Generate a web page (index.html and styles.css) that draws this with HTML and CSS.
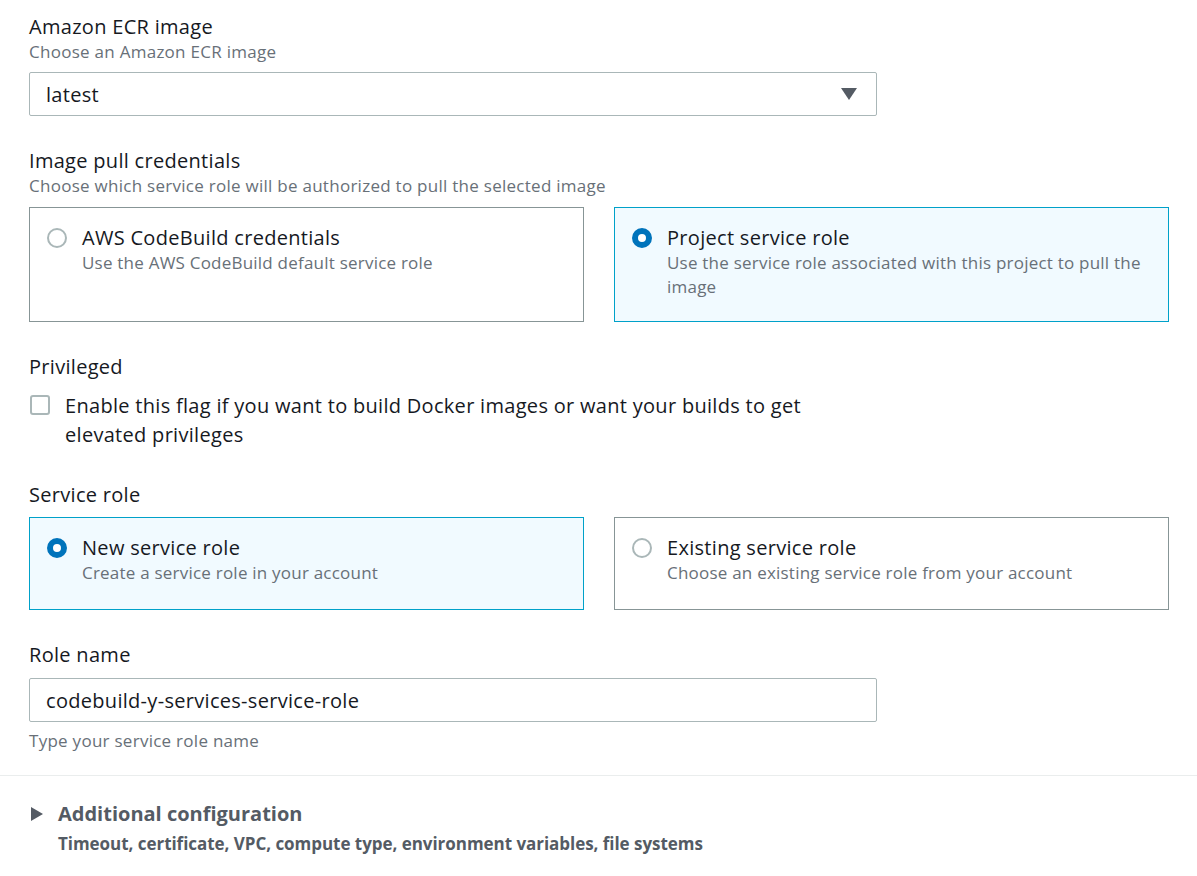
FILE: index.html
```html
<!DOCTYPE html>
<html>
<head>
<meta charset="utf-8">
<link rel="stylesheet" href="styles.css">
</head>
<body>
<div class="page">
  <div class="field">
    <div class="label">Amazon ECR image</div>
    <div class="desc">Choose an Amazon ECR image</div>
    <div class="select">
      <span>latest</span>
      <svg class="caret" width="16" height="12" viewBox="0 0 16 12"><path d="M0 0h16L8 12z" fill="#545b64"/></svg>
    </div>
  </div>

  <div class="field">
    <div class="label">Image pull credentials</div>
    <div class="desc">Choose which service role will be authorized to pull the selected image</div>
    <div class="tiles tall">
      <div class="tile">
        <span class="radio"></span>
        <div class="tile-text">
          <div class="tile-title">AWS CodeBuild credentials</div>
          <div class="tile-desc">Use the AWS CodeBuild default service role</div>
        </div>
      </div>
      <div class="tile selected">
        <span class="radio on"></span>
        <div class="tile-text">
          <div class="tile-title">Project service role</div>
          <div class="tile-desc">Use the service role associated with this project to pull the image</div>
        </div>
      </div>
    </div>
  </div>

  <div class="field priv">
    <div class="label">Privileged</div>
    <div class="check-row">
      <span class="checkbox"></span>
      <div class="check-text">Enable this flag if you want to build Docker images or want your builds to get elevated privileges</div>
    </div>
  </div>

  <div class="field">
    <div class="label">Service role</div>
    <div class="tiles short">
      <div class="tile selected">
        <span class="radio on"></span>
        <div class="tile-text">
          <div class="tile-title">New service role</div>
          <div class="tile-desc">Create a service role in your account</div>
        </div>
      </div>
      <div class="tile">
        <span class="radio"></span>
        <div class="tile-text">
          <div class="tile-title">Existing service role</div>
          <div class="tile-desc">Choose an existing service role from your account</div>
        </div>
      </div>
    </div>
  </div>

  <div class="field last">
    <div class="label">Role name</div>
    <div class="input">codebuild-y-services-service-role</div>
    <div class="help">Type your service role name</div>
  </div>
</div>
<div class="divider"></div>
<div class="expander">
  <div class="exp-head">
    <svg class="exp-caret" width="12" height="14" viewBox="0 0 12 14"><path d="M0 0v14l12-7z" fill="#545b64"/></svg>
    <span class="exp-title">Additional configuration</span>
  </div>
  <div class="exp-sub">Timeout, certificate, VPC, compute type, environment variables, file systems</div>
</div>
</body>
</html>
```

FILE: styles.css
```css
html, body {
  margin: 0;
  padding: 0;
  background: #ffffff;
}
body {
  font-family: "Open Sans", "Noto Sans", sans-serif;
  color: #16191f;
  width: 1197px;
  height: 876px;
  overflow: hidden;
}
.page {
  padding: 14px 29px 0 29px;
}
.field {
  display: flex;
  flex-direction: column;
  margin-bottom: 32px;
}
.field.priv {
  margin-bottom: 33px;
}
.field.last {
  margin-bottom: 22px;
}
.label {
  font-size: 20px;
  letter-spacing: 0.3px;
  line-height: 26px;
  color: #16191f;
}
.desc {
  font-size: 17px;
  letter-spacing: 0.27px;
  line-height: 24px;
  color: #687078;
}
.select {
  margin-top: 8px;
  width: 848px;
  height: 44px;
  box-sizing: border-box;
  border: 1px solid #aab7b8;
  border-radius: 2px;
  display: flex;
  align-items: center;
  justify-content: space-between;
  padding: 0 19px 0 16px;
  font-size: 20px;
  letter-spacing: 0.3px;
}
.tiles {
  display: grid;
  grid-template-columns: 555px 555px;
  column-gap: 30px;
  margin-top: 9px;
}
.tile {
  box-sizing: border-box;
  border: 1px solid #879596;
  display: flex;
  align-items: flex-start;
  padding: 17px 16px 0 17px;
  gap: 15px;
}
.tiles.tall .tile { height: 115px; }
.tiles.short .tile { height: 93px; }
.tile.selected {
  background: #f1faff;
  border-color: #00a1c9;
}
.radio {
  flex: none;
  width: 20px;
  height: 20px;
  box-sizing: border-box;
  border: 2px solid #aab7b8;
  border-radius: 50%;
  margin-top: 3px;
  background: #fff;
}
.radio.on {
  border: 6px solid #0073bb;
}
.tile-text {
  display: flex;
  flex-direction: column;
}
.tile-title {
  font-size: 20px;
  letter-spacing: 0.3px;
  line-height: 26px;
  color: #16191f;
}
.tile-desc {
  font-size: 17px;
  letter-spacing: 0.22px;
  line-height: 24px;
  color: #687078;
}
.check-row {
  display: flex;
  align-items: flex-start;
  gap: 15px;
  margin-top: 11px;
}
.checkbox {
  flex: none;
  width: 20px;
  height: 20px;
  box-sizing: border-box;
  border: 2px solid #aab7b8;
  border-radius: 3px;
  margin-top: 4px;
  margin-left: 1px;
}
.check-text {
  font-size: 20px;
  letter-spacing: 0.3px;
  line-height: 29px;
  max-width: 770px;
}
.input {
  margin-top: 10px;
  width: 848px;
  height: 44px;
  box-sizing: border-box;
  border: 1px solid #aab7b8;
  border-radius: 2px;
  display: flex;
  align-items: center;
  padding: 0 16px;
  font-size: 20px;
  letter-spacing: 0.3px;
}
.help {
  margin-top: 7px;
  font-size: 17px;
  letter-spacing: 0.27px;
  line-height: 24px;
  color: #687078;
}
.divider {
  height: 1px;
  background: #eaeded;
}
.expander {
  padding: 24px 29px 0 31px;
}
.exp-head {
  display: flex;
  align-items: center;
  gap: 15px;
}
.exp-title {
  font-size: 20px;
  font-weight: 700;
  color: #545b64;
  line-height: 28px;
}
.exp-sub {
  margin-left: 27px;
  margin-top: 4px;
  font-size: 17px;
  font-weight: 700;
  letter-spacing: -0.04px;
  color: #545b64;
  line-height: 24px;
}
```
